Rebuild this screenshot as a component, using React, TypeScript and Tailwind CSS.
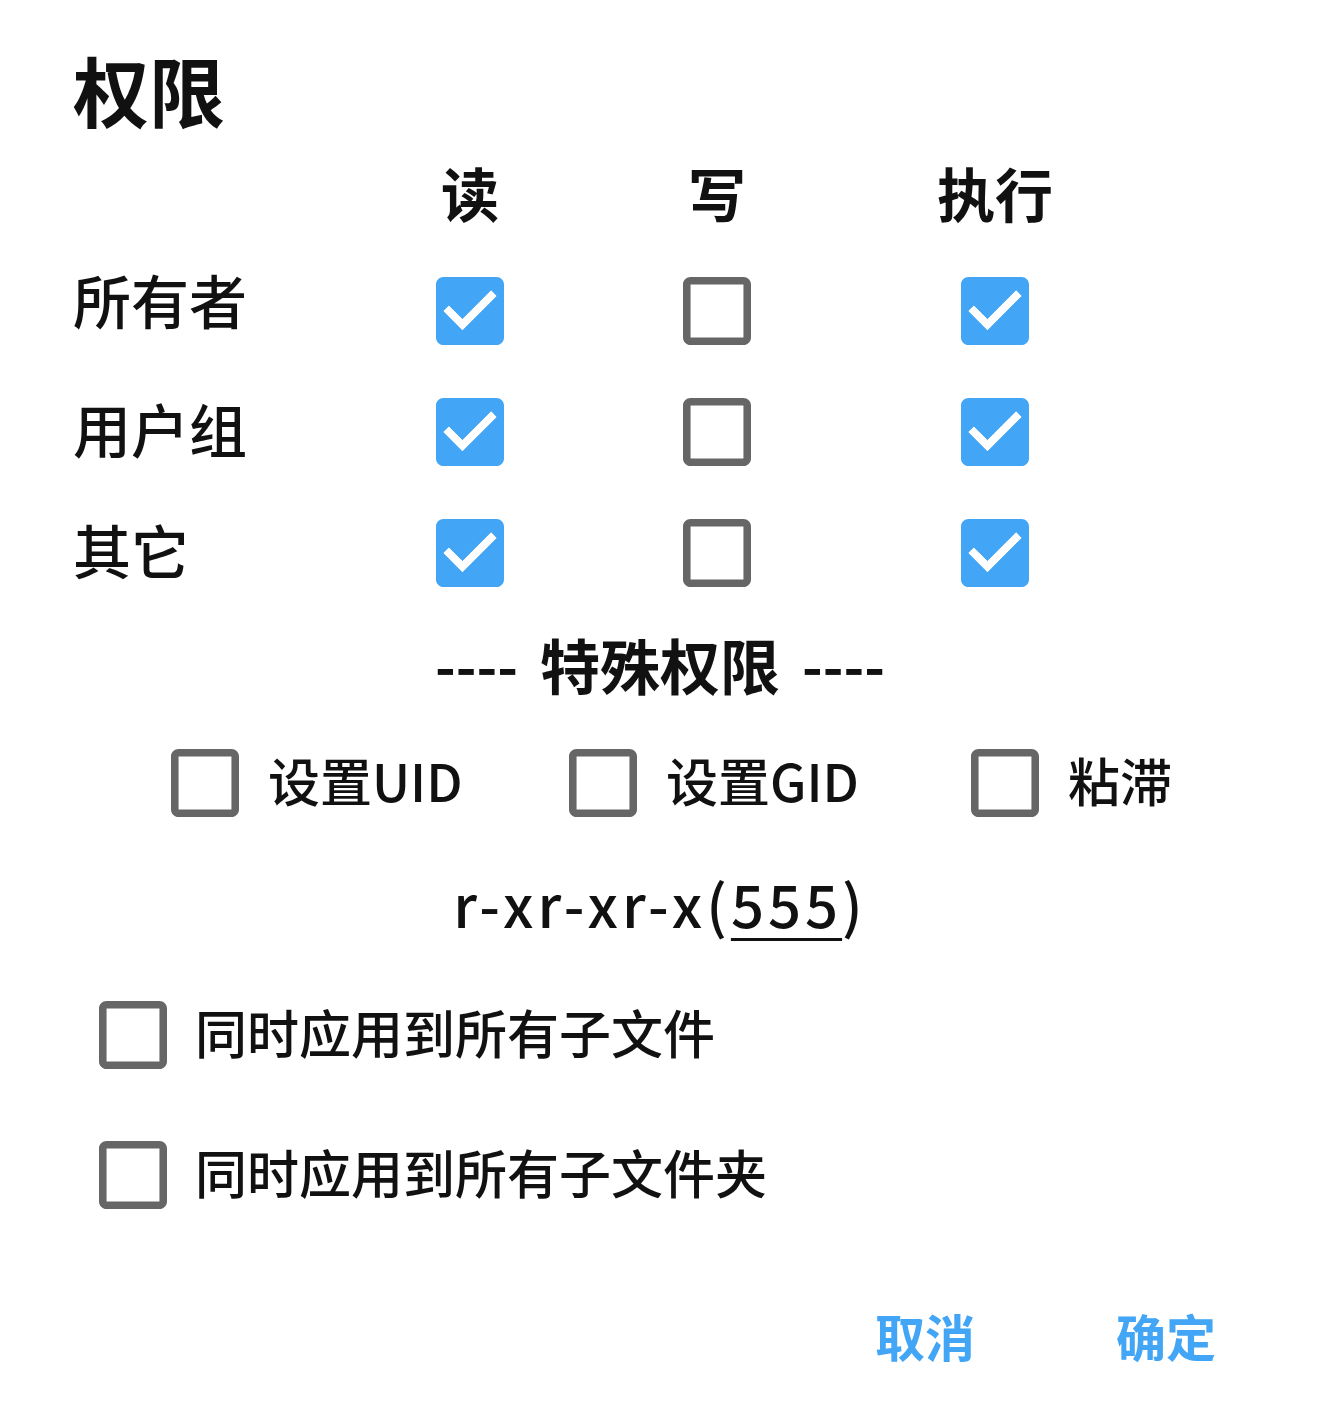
import React, { useState } from 'react';

const FONT = "font-['Noto_Sans_CJK_SC','Noto_Sans',sans-serif]";

const CheckBox: React.FC<{ checked: boolean; onToggle?: () => void }> = ({ checked, onToggle }) => (
  <button type="button" onClick={onToggle} className="w-[68px] h-[68px] shrink-0 block">
    {checked ? (
      <svg viewBox="3 3 18 18" className="w-full h-full" fill="#42a5f5">
        <path d="M19 3H5c-1.11 0-2 .9-2 2v14c0 1.1.89 2 2 2h14c1.11 0 2-.9 2-2V5c0-1.1-.89-2-2-2zm-9 14l-5-5 1.41-1.41L10 14.17l7.59-7.59L19 8l-9 9z" />
        <path d="M10 17l-5-5 1.41-1.41L10 14.17l7.59-7.59L19 8z" fill="#fff" />
      </svg>
    ) : (
      <svg viewBox="3 3 18 18" className="w-full h-full" fill="#666666">
        <path d="M19 5v14H5V5h14m0-2H5c-1.1 0-2 .9-2 2v14c0 1.1.9 2 2 2h14c1.1 0 2-.9 2-2V5c0-1.1-.9-2-2-2z" />
      </svg>
    )}
  </button>
);

const ROWS = ['所有者', '用户组', '其它'];

export default function App() {
  const [perms, setPerms] = useState<boolean[][]>([
    [true, false, true],
    [true, false, true],
    [true, false, true],
  ]);
  const [special, setSpecial] = useState([false, false, false]);
  const [applyFiles, setApplyFiles] = useState(false);
  const [applyDirs, setApplyDirs] = useState(false);

  const toggle = (r: number, c: number) =>
    setPerms((p) => p.map((row, i) => (i === r ? row.map((v, j) => (j === c ? !v : v)) : row)));

  const sym = perms.map((row) => `${row[0] ? 'r' : '-'}${row[1] ? 'w' : '-'}${row[2] ? 'x' : '-'}`).join('');
  const num = perms.map((row) => (row[0] ? 4 : 0) + (row[1] ? 2 : 0) + (row[2] ? 1 : 0)).join('');

  return (
    <div className={`w-[1320px] h-[1407px] bg-white text-[#111] ${FONT}`}>
      <div className="pt-[49px] pl-[73px] h-[134px]">
        <h1 className="text-[76px] font-bold leading-[80px]">权限</h1>
      </div>

      <div className="grid grid-cols-[307px_180px_314px_242px] pl-[73px]">
        <div className="h-[116px]" />
        {['读', '写', '执行'].map((h) => (
          <div key={h} className="h-[116px] flex items-center justify-center text-[58px] font-bold">
            {h}
          </div>
        ))}
        {ROWS.map((label, r) => (
          <React.Fragment key={label}>
            <div className={`h-[121px] flex items-center text-[58px] font-medium ${r === 0 ? 'pb-[22px]' : 'pb-[6px]'}`}>
              {label}
            </div>
            {[0, 1, 2].map((c) => (
              <div key={c} className="h-[121px] flex items-center justify-center">
                <CheckBox checked={perms[r][c]} onToggle={() => toggle(r, c)} />
              </div>
            ))}
          </React.Fragment>
        ))}
      </div>

      <div className="h-[108px] flex items-center justify-center gap-[22px] pb-[6px] font-bold">
        <span className="text-[56px]">----</span>
        <span className="text-[60px]">特殊权限</span>
        <span className="text-[56px]">----</span>
      </div>

      <div className="h-[124px] flex items-center pl-[171px] text-[52px] font-medium">
        {['设置UID', '设置GID', '粘滞'].map((t, i) => (
          <div key={t} className={`flex items-center gap-[29px] ${i === 0 ? 'w-[398px]' : i === 1 ? 'w-[402px]' : ''}`}>
            <CheckBox
              checked={special[i]}
              onToggle={() => setSpecial((s) => s.map((v, j) => (j === i ? !v : v)))}
            />
            <span className="pb-[6px]">{t}</span>
          </div>
        ))}
      </div>

      <div className="h-[120px] flex items-center justify-center pb-[4px] text-[58px] font-medium tracking-[4px]">
        <span>
          {sym}(<span className="underline underline-offset-[10px] decoration-[3px]">{num}</span>)
        </span>
      </div>

      <div className="h-[140px] flex items-center gap-[28px] pl-[99px] text-[52px] font-medium">
        <CheckBox checked={applyFiles} onToggle={() => setApplyFiles(!applyFiles)} />
        <span className="pb-[6px]">同时应用到所有子文件</span>
      </div>
      <div className="h-[140px] flex items-center gap-[28px] pl-[99px] text-[52px] font-medium">
        <CheckBox checked={applyDirs} onToggle={() => setApplyDirs(!applyDirs)} />
        <span className="pb-[6px]">同时应用到所有子文件夹</span>
      </div>

      <div className="mt-[58px] h-[70px] flex items-center justify-end gap-[141px] pr-[104px] pb-[6px] text-[50px] font-bold text-[#42a5f5]">
        <button type="button">取消</button>
        <button type="button">确定</button>
      </div>
    </div>
  );
}
